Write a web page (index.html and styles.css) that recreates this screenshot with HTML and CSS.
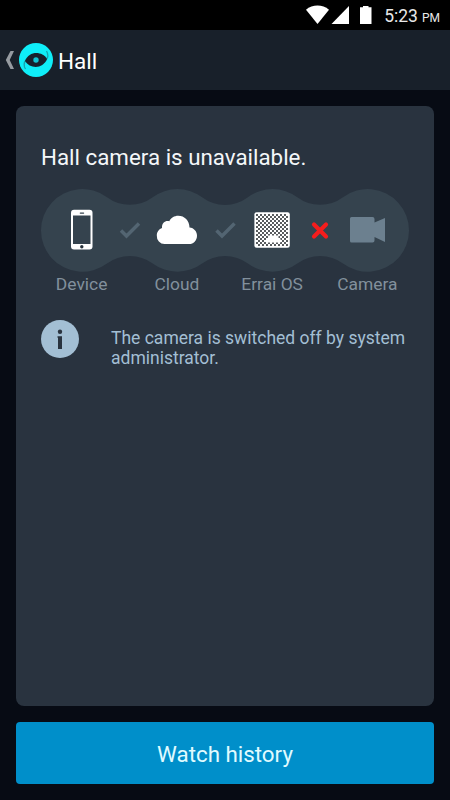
FILE: index.html
```html
<!DOCTYPE html>
<html lang="en">
<head>
  <meta charset="UTF-8" />
  <meta name="viewport" content="width=device-width, initial-scale=1.0"/>
  <title>Hall</title>
  <link rel="stylesheet" href="styles.css">
</head>
<body>

<div class="status-bar">
  <svg class="status-icons" width="68" height="20" viewBox="0 0 68 20">
    <path d="M0 4.800C6.500-.8 16.500-.8 23 4.800L11.500 19z"/>
    <path d="M43 1v18H25.500z"/>
    <path d="M54 2.200h3V1h5.500v1.200h3V19H54z"/>
  </svg>
  <span class="clock">5:23</span>
  <span class="ampm">PM</span>
</div>

<header class="app-bar">
  <svg class="back" width="10" height="20" viewBox="0 0 10 20">
    <path d="M5.500 1H9L4.700 10 9 19H5.500L.8 10z"/>
  </svg>
  <svg class="logo" width="34" height="34" viewBox="0 0 34 34">
    <circle cx="17" cy="17" r="17" fill="#0feef8"/>
    <path d="M27.500 8Q30.500 13 27 17" fill="none" stroke="#14a5b0" stroke-width="1.300"/>
    <path d="M6.500 26Q3.500 21 7 17" fill="none" stroke="#14a5b0" stroke-width="1.300"/>
    <path d="M6 18C10 7.800 23 7.800 28 16 24 26.200 11 26.200 6 18z" fill="#17222d"/>
    <circle cx="17" cy="17" r="2.700" fill="#12c3d2"/>
  </svg>
  <h1>Hall</h1>
</header>

<main class="card">
  <h2>Hall camera is unavailable.</h2>

  <svg class="chain" width="368" height="83" viewBox="0 0 368 83">
    <defs>
      <pattern id="grille" x="215" y="25" width="4" height="4" patternUnits="userSpaceOnUse">
        <circle cx="1" cy="1" r=".95" fill="#101519"/>
        <circle cx="3" cy="3" r=".95" fill="#101519"/>
      </pattern>
    </defs>
    <path fill="#35434e" d="M66 8.300
      A38.300 38.300 0 0 0 111.700 8.300 A41.300 41.300 0 0 1 161.100 8.300
      A38.300 38.300 0 0 0 206.900 8.300 A41.300 41.300 0 0 1 256.300 8.300
      A38.300 38.300 0 0 0 302 8.300 A41.300 41.300 0 1 1 302 74.500
      A38.300 38.300 0 0 0 256.300 74.500 A41.300 41.300 0 0 1 206.900 74.500
      A38.300 38.300 0 0 0 161.100 74.500 A41.300 41.300 0 0 1 111.700 74.500
      A38.300 38.300 0 0 0 66 74.500 A41.300 41.300 0 1 1 66 8.300z"/>

    <!-- phone -->
    <rect x="30" y="20.800" width="21.500" height="39.700" rx="3" fill="#fff"/>
    <rect x="32" y="26.500" width="17.500" height="28.500" fill="#35434e"/>
    <rect x="38.700" y="23.400" width="4.500" height="1.300" rx=".6" fill="#35434e"/>
    <circle cx="40.800" cy="57.800" r="1.700" fill="#26323b"/>

    <!-- links -->
    <path class="check" d="M80 41.500l5.500 5.500L98 34.500"/>
    <path class="check" d="M175.500 41.500l5.500 5.500L193.500 34.500"/>
    <path class="cross" d="M273 35.500l12 12M285 35.500l-12 12"/>

    <!-- cloud -->
    <path fill="#fff" d="M123.500 55a8 8 0 0 1-7.700-8.500c0-4 2.500-6.500 5.200-7.500-.5-5.500 4-8 7.300-6.800 1.500-3.200 5-5.400 8.900-5.400 6.300 0 11.300 4.900 11.300 11.700 4.500.5 7.500 3.800 7.500 8.200 0 4.800-3.500 8.300-7.800 8.300z"/>

    <!-- hub -->
    <rect x="213.400" y="23.300" width="35.400" height="35.500" rx="2.200" fill="#fff"/>
    <rect x="215" y="25" width="32" height="32" fill="url(#grille)"/>
    <path d="M225 53.500v-4h2v-3h10.500v3h2v4z" fill="#fff"/>

    <!-- camera -->
    <path fill="#6c808f" d="M310.500 28H331.500a2 2 0 0 1 2 2v3.500L344 29v24L333.500 48v3.500a2 2 0 0 1-2 2H310.500a1.500 1.500 0 0 1-1.500-1.500V29.500a1.500 1.500 0 0 1 1.500-1.500z"/>
  </svg>

  <div class="labels">
    <span>Device</span>
    <span>Cloud</span>
    <span>Errai OS</span>
    <span>Camera</span>
  </div>

  <div class="notice">
    <svg width="38" height="38" viewBox="0 0 38 38">
      <circle cx="19" cy="19" r="19" fill="#a3bfd4"/>
      <circle cx="19" cy="11.700" r="2.200" fill="#29333f"/>
      <path d="M16.500 16.300H21V29h-4V17.800h-.5z" fill="#29333f"/>
    </svg>
    <p>The camera is switched off by system administrator.</p>
  </div>
</main>

<button class="history-btn">Watch history</button>

</body>
</html>
```

FILE: styles.css
```css
* {
  box-sizing: border-box;
}

body {
  margin: 0;
  height: 800px;
  display: flex;
  flex-direction: column;
  background: #070b14;
  font-family: Roboto, sans-serif;
  overflow: hidden;
}

h1, h2, p {
  margin: 0;
  font-weight: 400;
}

.status-bar {
  height: 30px;
  flex: none;
  display: flex;
  align-items: baseline;
  justify-content: flex-end;
  padding: 6px 10px 0 0;
  background: #000;
  color: #e8e8e8;
}

.status-icons {
  align-self: flex-start;
  fill: #fff;
  margin: -1px 10px 0 0;
}

.clock {
  font-size: 17.500px;
}

.ampm {
  margin-left: 4px;
  font-size: 12px;
}

.app-bar {
  height: 60px;
  flex: none;
  display: flex;
  align-items: center;
  padding-left: 5px;
  background: #18202a;
}

.back {
  fill: #969ba1;
}

.logo {
  margin-left: 4px;
}

.app-bar h1 {
  margin: 2px 0 0 5px;
  font-size: 22.500px;
  color: #fff;
}

.card {
  height: 600px;
  flex: none;
  margin: 16px;
  padding: 38px 25px 0;
  border-radius: 8px;
  background: #29333f;
}

.card h2 {
  font-size: 22.350px;
  line-height: 27px;
  color: #f4f7f9;
  white-space: nowrap;
}

.chain {
  display: block;
  margin-top: 18px;
}

.check, .cross {
  fill: none;
  stroke: #536572;
  stroke-width: 3.500;
}

.cross {
  stroke: #f51d1d;
  stroke-width: 4.200;
  stroke-linecap: round;
}

.labels {
  display: grid;
  grid-template-columns: repeat(4, 1fr);
  margin: 1px -6px 0 -7px;
  font-size: 17.400px;
  line-height: 22px;
  text-align: center;
  color: #82909c;
}

.notice {
  display: flex;
  gap: 32px;
  margin-top: 25px;
}

.notice svg {
  flex: none;
}

.notice p {
  margin: 8px -10px 0 0;
  width: 305px;
  font-size: 17.500px;
  line-height: 20px;
  color: #a3bfd4;
}

.history-btn {
  height: 62px;
  flex: none;
  margin: 0 16px;
  padding-top: 3px;
  border: none;
  border-radius: 4px;
  background: #008fca;
  color: #e0fbff;
  font-family: inherit;
  font-size: 22.350px;
}
```
